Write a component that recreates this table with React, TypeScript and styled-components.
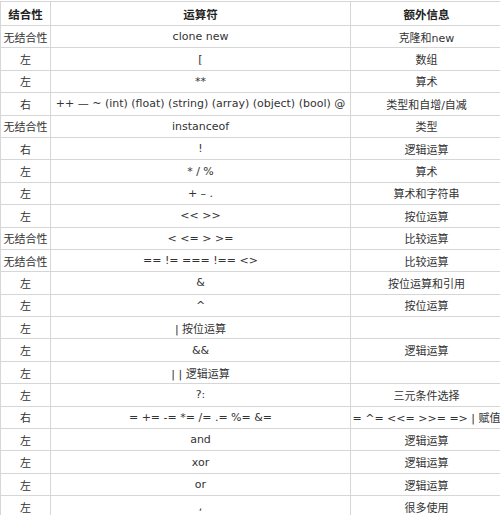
import React from 'react';
import styled, { createGlobalStyle } from 'styled-components';

const GlobalStyle = createGlobalStyle`
  body {
    margin: 0;
    background: #fff;
    font-family: "DejaVu Sans", "Noto Sans CJK SC", sans-serif;
    color: #333;
  }
`;

const Table = styled.table`
  width: 500px;
  margin-top: 1px;
  border-collapse: collapse;
  table-layout: fixed;
  font-size: 11px;
`;

const HeadCell = styled.th<{ w: number }>`
  width: ${(p) => p.w}px;
  height: 23px;
  padding: 0;
  border: 1px solid #d6d6d6;
  font-weight: bold;
  font-size: 11.5px;
  text-align: center;
  color: #222;
`;

const Cell = styled.td`
  height: 21.4px;
  padding: 0;
  border: 1px solid #d6d6d6;
  text-align: center;
  white-space: nowrap;
  overflow: visible;
`;

interface IRow {
  assoc: string;
  op: string;
  info: string;
}

const rows: IRow[] = [
  { assoc: '无结合性', op: 'clone new', info: '克隆和new' },
  { assoc: '左', op: '[', info: '数组' },
  { assoc: '左', op: '**', info: '算术' },
  { assoc: '右', op: '++ — ~ (int) (float) (string) (array) (object) (bool) @', info: '类型和自增/自减' },
  { assoc: '无结合性', op: 'instanceof', info: '类型' },
  { assoc: '右', op: '!', info: '逻辑运算' },
  { assoc: '左', op: '* / %', info: '算术' },
  { assoc: '左', op: '+ – .', info: '算术和字符串' },
  { assoc: '左', op: '<< >>', info: '按位运算' },
  { assoc: '无结合性', op: '< <= > >=', info: '比较运算' },
  { assoc: '无结合性', op: '== != === !== <>', info: '比较运算' },
  { assoc: '左', op: '&', info: '按位运算和引用' },
  { assoc: '左', op: '^', info: '按位运算' },
  { assoc: '左', op: '| 按位运算', info: '' },
  { assoc: '左', op: '&&', info: '逻辑运算' },
  { assoc: '左', op: '| | 逻辑运算', info: '' },
  { assoc: '左', op: '?:', info: '三元条件选择' },
  { assoc: '右', op: '= += -= *= /= .= %= &=', info: '= ^= <<= >>= => | 赋值' },
  { assoc: '左', op: 'and', info: '逻辑运算' },
  { assoc: '左', op: 'xor', info: '逻辑运算' },
  { assoc: '左', op: 'or', info: '逻辑运算' },
  { assoc: '左', op: ',', info: '很多使用' },
];

export default function App() {
  return (
    <>
      <GlobalStyle />
      <Table>
        <thead>
          <tr>
            <HeadCell w={49}>结合性</HeadCell>
            <HeadCell w={299}>运算符</HeadCell>
            <HeadCell w={151}>额外信息</HeadCell>
          </tr>
        </thead>
        <tbody>
          {rows.map((r, i) => (
            <tr key={i}>
              <Cell>{r.assoc}</Cell>
              <Cell>{r.op}</Cell>
              <Cell>{r.info}</Cell>
            </tr>
          ))}
        </tbody>
      </Table>
    </>
  );
}
